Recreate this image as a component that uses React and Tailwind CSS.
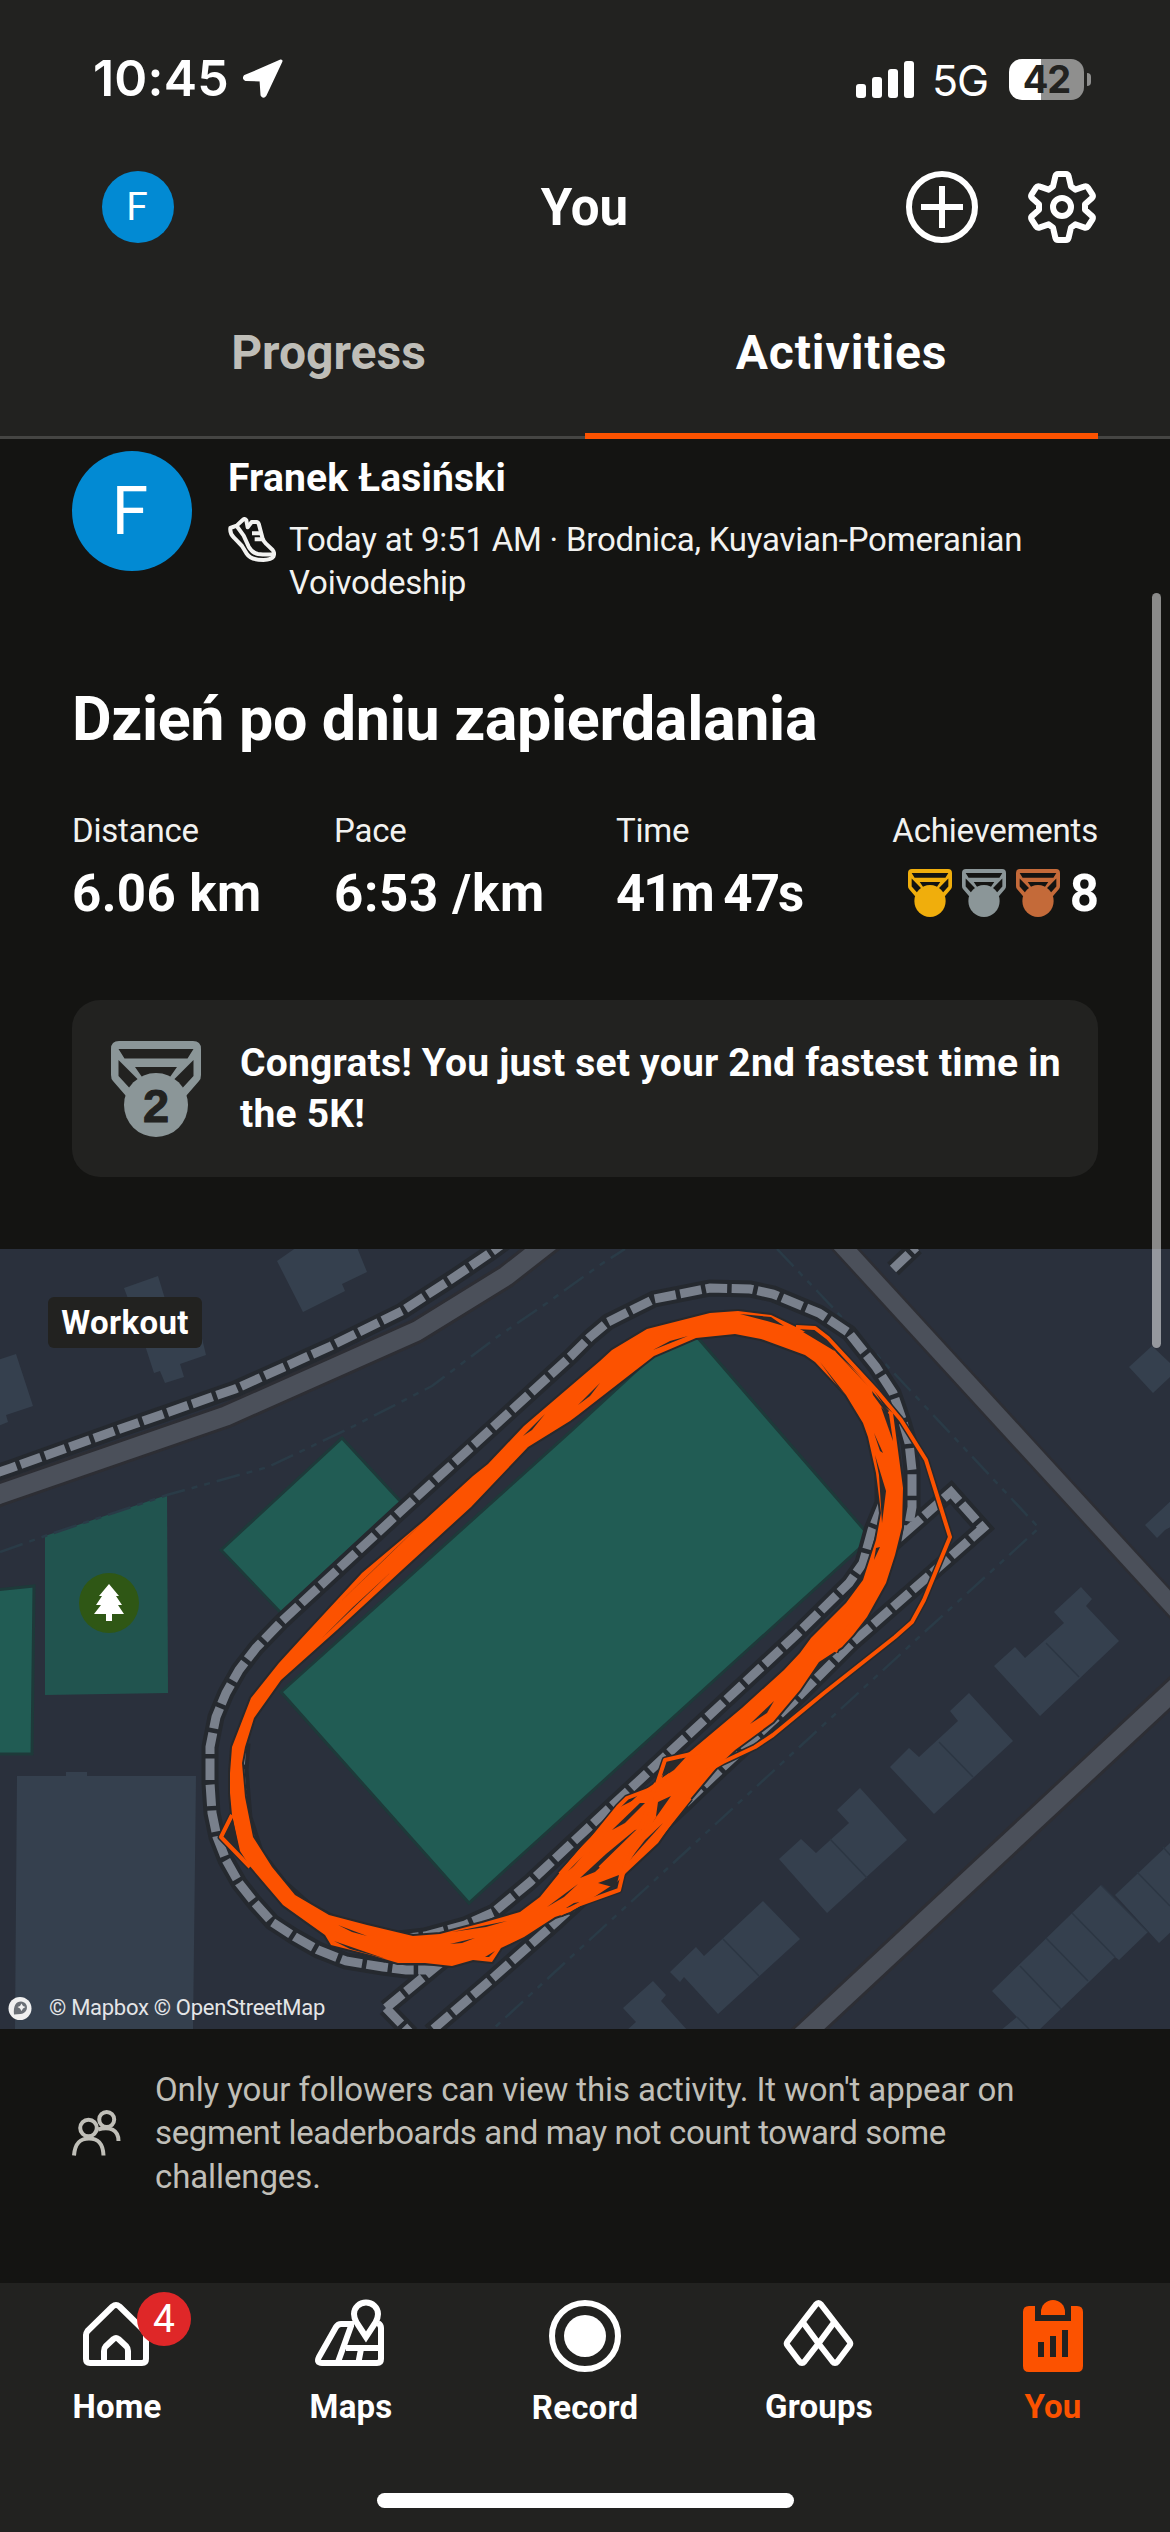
import React from 'react';

function StatusBar() {
  return (
    <div className="flex h-[138px] items-start justify-between pt-[57px] pr-[79px] pl-[93px]">
      <div className="flex items-center gap-[13px]">
        <span className="font-[Inter] text-[50px] leading-[42px] font-semibold tracking-[0.2px]">10:45</span>
        <svg className="h-[42px] w-[42px]" viewBox="242 57 42 42" fill="#fff" stroke="#fff" strokeWidth="3" strokeLinejoin="round">
          <path d="M281 61 L245 76.5 Q243.5 78.5 246 79.5 L261 80 L262 95 Q263.5 97.500 265 95 Z" />
        </svg>
      </div>
      <div className="flex items-center">
        <svg className="h-[41px] w-[60px]" viewBox="855 57 60 41" fill="#fff">
          <rect x="856" y="82" width="10" height="14" rx="3" />
          <rect x="872" y="75" width="10" height="21" rx="3" />
          <rect x="888" y="67" width="10" height="29" rx="3" />
          <rect x="904" y="59" width="10" height="37" rx="3" />
        </svg>
        <span className="ml-[17px] w-[57px] pt-[3px] font-[Inter] text-[43px] leading-[41px] tracking-[-1.1px]">5G</span>
        <div className="ml-[20px] flex h-[41px] w-[75px] items-center justify-center rounded-[13px] bg-[linear-gradient(90deg,#fff_32px,#8f8f8e_32px)]">
          <span className="font-[Inter] text-[38px] leading-[41px] font-bold tracking-[-1px] text-[#222220]">42</span>
        </div>
        <div className="ml-[3px] h-[13px] w-[4px] rounded-r-full bg-[#8f8f8e]" />
      </div>
    </div>
  );
}

function Gear() {
  return (
    <svg className="h-[72px] w-[72px]" viewBox="558 393 216 216" fill="none" stroke="#fff" strokeWidth="18" strokeLinejoin="round">
      <path d="M654 402 H678 Q684 402 686 409 L693 439 L706 449 L732 440 Q740 437 744 443 L757 463 Q761 470 755 475 L735 493 V509 L755 527 Q761 532 757 539 L744 559 Q740 565 732 562 L706 553 L693 563 L686 593 Q684 600 678 600 H654 Q648 600 646 593 L639 563 L626 553 L600 562 Q592 565 588 559 L575 539 Q571 532 577 527 L597 509 V493 L577 475 Q571 470 575 463 L588 443 Q592 437 600 440 L626 449 L639 439 L646 409 Q648 402 654 402 Z" />
      <circle cx="666" cy="501" r="27" />
    </svg>
  );
}

function NavBar() {
  return (
    <div className="grid h-[138px] grid-cols-3 items-center pr-[72px] pl-[102px]">
      <div className="flex h-[72px] w-[72px] items-center justify-center rounded-full bg-[#028ad3] pr-[2px] text-[39px]">F</div>
      <div className="-ml-[31px] pt-[2px] text-center text-[51px] leading-[60px] font-bold">You</div>
      <div className="flex justify-end gap-[48px]">
        <svg className="h-[72px] w-[72px]" viewBox="0 0 72 72" fill="none" stroke="#fff" strokeWidth="6">
          <circle cx="36" cy="36" r="33" />
          <path d="M36 15 V57 M15 36 H57" />
        </svg>
        <Gear />
      </div>
    </div>
  );
}

function Tabs() {
  return (
    <div className="flex h-[163px] items-stretch border-b-[3px] border-[#454543] px-[72px] text-center text-[48px] leading-[60px] font-bold">
      <div className="flex-1 pt-[47px] text-[#bfbeb8]">Progress</div>
      <div className="-mb-[3px] flex-1 border-b-[6px] border-[#fc5200] pt-[47px] tracking-[0.9px]">Activities</div>
    </div>
  );
}

function Shoe() {
  return (
    <svg className="-mt-px h-[45px] w-[48px] shrink-0" viewBox="504 231 144 135" fill="none" stroke="#f2f2f0" strokeWidth="12" strokeLinejoin="round">
      <path d="M511 264 L530 257 L548 240 Q555 234 559 241 L563 262 L575 246 H590 Q595 247 597 254 L608 296 Q611 305 618 311 L638 330 Q645 338 640 350 Q634 359 610 360 Q572 360 560 341 L546 318 L522 293 Q509 281 511 264 Z" />
      <path d="M530 258 L551 287 L566 320 Q576 338 594 342 Q618 345 641 343 M576 280 H602 M584 298 H608" />
    </svg>
  );
}

function Medal({ className, color, place }) {
  return (
    <svg className={className} viewBox="111 1041 90 96" preserveAspectRatio="none">
      <path
        fill={color}
        fillRule="evenodd"
        d="M111 1049 Q111 1041 119 1041 H193 Q201 1041 201 1049 V1075 Q201 1079 199 1081 L186 1096 H126 L113 1081 Q111 1079 111 1075 Z M118.500 1049 L124.500 1058.500 H187.500 L193.500 1049 Z M118.500 1060 V1076 L130 1088.500 L138 1079.500 Z M193.500 1060 V1076 L182 1088.500 L174 1079.500 Z M135 1067 L142 1077 H170 L177 1067 Z"
      />
      <circle cx="156" cy="1105" r="32" fill={color} />
      {place && (
        <text x="156" y="1121.500" textAnchor="middle" fontFamily="Liberation Sans, sans-serif" fontWeight="700" fontSize="47" fill="#222220" stroke="#222220" strokeWidth="1">
          {place}
        </text>
      )}
    </svg>
  );
}

function Activity() {
  return (
    <div className="px-[72px] pt-[12px]">
      <div className="flex gap-[36px]">
        <div className="flex h-[120px] w-[120px] shrink-0 items-center justify-center rounded-full bg-[#028ad3] pr-[4px] text-[66px]">F</div>
        <div>
          <div className="pt-px text-[39px] leading-[53px] font-bold tracking-[0.2px]">Franek Łasiński</div>
          <div className="mt-[13px] flex gap-[13px]">
            <Shoe />
            <div className="text-[33px] leading-[43px] tracking-[-0.22px] text-[#f2f2f0]">
              Today at 9:51 AM · Brodnica, Kuyavian-Pomeranian
              <br />
              Voivodeship
            </div>
          </div>
        </div>
      </div>
      <div className="mt-[79px] text-[61px] leading-[72px] font-bold tracking-[-0.35px]">Dzień po dniu zapierdalania</div>
      <div className="mt-[54px] grid grid-cols-[262px_282px_1fr_auto] text-[51px] leading-[60px] font-bold">
        <Stat label="Distance">
          <span className="tracking-[0.4px]">6.06 km</span>
        </Stat>
        <Stat label="Pace">
          <span className="tracking-[0.7px]">6:53 /km</span>
        </Stat>
        <Stat label="Time">
          <span className="tracking-[-2px]">41m 47s</span>
        </Stat>
        <Stat label="Achievements">
          <div className="flex items-center justify-end gap-[10px]">
            <Medal className="-mt-[2px] h-[48px] w-[44px]" color="#f0ae0c" />
            <Medal className="-mt-[2px] h-[48px] w-[44px]" color="#8b9698" />
            <Medal className="-mt-[2px] h-[48px] w-[44px]" color="#c46a39" />
            <span className="-mr-px">8</span>
          </div>
        </Stat>
      </div>
      <div className="mt-[76px] flex h-[177px] items-center rounded-[28px] bg-[#222220] pl-[39px]">
        <Medal className="h-[96px] w-[90px]" color="#8b9698" place="2" />
        <div className="ml-[39px] text-[39px] leading-[51px] font-bold tracking-[0.22px]">
          Congrats! You just set your 2nd fastest time in
          <br />
          the 5K!
        </div>
      </div>
    </div>
  );
}

function Stat({ label, children }) {
  return (
    <div>
      <div className="mb-[12px] text-[33px] leading-[43px] font-normal tracking-[-0.2px] text-[#f2f2f0]">{label}</div>
      {children}
    </div>
  );
}

const buildings = [
  '124,1288 158,1276 169,1312 200,1330 206,1355 180,1364 184,1377 165,1383 160,1371 154,1373 140,1330',
  '277,1261 300,1245 356,1245 367,1272 342,1284 345,1291 303,1312',
  '-2,1360 16,1354 33,1406 6,1415 8,1422 -2,1426',
  '17,1776 66,1776 66,1772 87,1772 87,1776 196,1776 193,2030 15,2030',
  '1081,1587 1092,1599 1086,1606 1119,1641 1040,1716 994,1666 1015,1647 1025,1658 1064,1623 1054,1612',
  '969,1693 1013,1741 934,1814 890,1767 909,1748 919,1757 958,1721 950,1711',
  '860,1788 907,1840 827,1913 779,1859 801,1839 816,1853 849,1823 837,1810',
  '763,1901 800,1939 718,2014 684,1977 680,1982 670,1972 696,1947 704,1956',
  '653,1981 666,1995 661,2001 688,2031 626,2031 636,2022 623,2008',
  '1101,1885 1148,1932 1119,1960 1115,1957 1038,2031 1000,2031 1017,2017 992,1991',
  '1115,1895 1172,1841 1172,1931 1159,1943',
  '1129,1367 1152,1346 1172,1365 1172,1375 1153,1393',
  '1145,1525 1172,1500 1172,1526 1165,1530 1157,1538',
];

const dashedPaths = [
  'M-4 1473 L11 1468 L120 1429 L235 1389 L331 1346 L402 1311 L450 1280 L490 1253 L512 1237',
  'M386 2008 L432 1970 L406 1970 L383 1967 L346 1961 L318 1950 L295 1937 L272 1922 L254 1902 L239 1883 L226 1860 L217 1837 L212 1813 L210 1783 L210 1747 L216 1717 L226 1693 L239 1670 L256 1648 L281 1622 L400 1512 L570 1357 L590 1337 L608 1322 L654 1299 L710 1288 L750 1289 L773 1294 L819 1313 L849 1333 L876 1367 L893 1393 L903 1422 L909 1443 L912 1470 L912 1507 L908 1530 L951 1492 L983 1528 L932 1573 L853 1642 L792 1703 L723 1767 L681 1807 L555 1923 L494 1977 L430 2032',
  'M386 2008 L411 2034',
  'M242 1743 L240 1770 L244 1818 L256 1855 L280 1886 L307 1910 L343 1929 L390 1940 L425 1936 L465 1925 L494 1912 L530 1882 L574 1841 L796 1635 L849 1583 L863 1563 L872 1530 L883 1503 L883 1470 L880 1440',
  'M893 1269 L916 1247',
];

const orangeBody =
  'M230 1773 L232 1747 L251 1698 L279 1663 L300 1640 L362 1573 L425 1520 L473 1476 L488 1464 L524 1426 L600 1361 L612 1350 L647 1329 L710 1313 L738 1311 L771 1315 L796 1327 L815 1337 L834 1350 L872 1387 L884 1406 L893 1413 L903 1488 L902 1527 L895 1555 L886 1583 L867 1617 L853 1635 L842 1647 L819 1662 L800 1690 L773 1722 L735 1750 L717 1767 L681 1810 L658 1843 L627 1872 L617 1882 L585 1903 L570 1912 L555 1917 L524 1937 L501 1948 L492 1962 L473 1960 L452 1966 L425 1963 L398 1963 L371 1955 L331 1945 L325 1935 L283 1905 L249 1865 L240 1851 L232 1815 L230 1793 Z M242 1763 L245 1797 L253 1837 L272 1867 L295 1895 L329 1915 L367 1925 L413 1936 L440 1934 L482 1923 L520 1912 L540 1897 L570 1860 L593 1833 L620 1807 L640 1797 L656 1783 L667 1770 L692 1750 L742 1708 L784 1670 L800 1653 L811 1638 L846 1603 L863 1580 L876 1540 L881 1513 L876 1473 L868 1437 L863 1423 L846 1395 L815 1362 L805 1355 L761 1339 L735 1334 L696 1338 L654 1356 L578 1415 L570 1421 L528 1447 L471 1507 L402 1570 L337 1630 L281 1680 L254 1718 L245 1747 Z';

const orangeStrays = [
  'M796 1327 L815 1328 L828 1338 L876 1390 L901 1420 L926 1460 L950 1537 L924 1600 L912 1622 L895 1637 L824 1693 L773 1735 L755 1747 L723 1762 L700 1775',
  'M232 1815 L221 1837 L250 1867',
  'M700 1752 L665 1760 L656 1787 L627 1798 L618 1807 L592 1839 L560 1874',
  'M670 1775 L640 1796 L612 1823 L575 1868',
  'M656 1783 L651 1800 L640 1829 L600 1868',
  'M655 1815 L625 1865 L619 1890 L580 1904 L560 1914',
  'M690 1798 L655 1842 L622 1872',
  'M835 1652 L840 1640 L850 1625',
];

const slivers = [
  '233,1820 224,1835 239,1850',
  '740,1314 771,1317 784,1326 767,1321',
  '803,1332 816,1331 868,1386 838,1353',
  '872,1391 889,1411 887,1414 873,1395',
  '881,1407 889,1414 893,1441',
  '874,1433 883,1453 880,1451',
  '875,1455 886,1491 882,1523 879,1475',
  '820,1362 846,1395 838,1387',
  '876,1548 880,1547 874,1560',
  '338,1604 428,1517 383,1561',
  '322,1638 391,1572 352,1608',
  '523,1436 545,1414 532,1430',
  '578,1405 600,1383 590,1396',
  '653,1350 688,1336 670,1341',
  '580,1878 595,1872 642,1829 635,1830 606,1854',
  '628,1862 655,1832 663,1823 645,1840',
  '652,1823 671,1796 658,1802 656,1816',
  '598,1883 619,1875 616,1888',
  '662,1778 667,1763 686,1757 674,1770',
  '750,1724 774,1701 767,1713',
  '612,1830 640,1803 645,1803 625,1823',
  '576,1852 598,1826 613,1811 603,1825',
  '566,1908 574,1903 580,1902 572,1907',
  '568,1871 598,1841 586,1856',
  '338,1925 367,1936 352,1932',
  '334,1941 386,1959 350,1949',
  '452,1932 507,1921 486,1927',
  '450,1944 475,1938 462,1943',
  '547,1907 578,1884 564,1897',
  '485,1957 495,1951 489,1957',
];

function TrackMap() {
  return (
    <svg className="block h-[780px] w-[1170px]" viewBox="0 1249 1170 780">
      <rect x="0" y="1249" width="1170" height="780" fill="#2a303c" />
      <g fill="#35404e">
        {buildings.map((points) => (
          <polygon key={points} points={points} />
        ))}
      </g>
      <path
        stroke="#2c3643"
        strokeWidth="1.500"
        d="M1046 1643 L1079 1677 M939 1742 L973 1777 M830 1839 L867 1878 M723 1939 L759 1976 M1072 1913 L1115 1957 M1046 1938 L1088 1981 M1020 1966 L1061 2009 M1017 2017 L1029 2029 M1101 1885 L1148 1932 M1137 1872 L1170 1906 M1163 1847 L1172 1857"
      />
      <polygon points="45,1536 167,1495 168,1693 45,1695" fill="#21544f" />
      <g fill="#215c54" stroke="#1e3a3a" strokeWidth="3">
        <polygon points="-6,1590 34,1586 32,1754 -6,1754" />
        <polygon points="342,1438 401,1502 281,1613 221,1550" />
        <polygon points="281,1692 570,1432 672,1338 698,1338 867,1533 861,1547 469,1903" />
      </g>
      <g fill="none" stroke="#2a3b47" strokeWidth="2.500" strokeDasharray="24 7 6 7 6 7">
        <path d="M0 1552 L45 1536 L167 1495 L268 1467 L348 1429 L432 1386 L497 1337 L547 1303 L600 1265 L625 1249" />
        <path d="M777 1249 L819 1293 L907 1387 L1039 1528 L918 1638 L570 1958 L492 2030" />
      </g>
      <g fill="none" strokeLinejoin="round">
        <path stroke="#2d2e34" strokeWidth="25" d="M-10 1498 L0 1494 L226 1416 L417 1331 L506 1276 L570 1226" />
        <path stroke="#4b505a" strokeWidth="19" d="M-10 1498 L0 1494 L226 1416 L417 1331 L506 1276 L570 1226" />
        <path stroke="#2d2e34" strokeWidth="22" d="M827 1229 L1190 1625" />
        <path stroke="#4b505a" strokeWidth="17" d="M827 1229 L1190 1625" />
        <path stroke="#2d2e34" strokeWidth="26" d="M1190 1675 L787 2050" />
        <path stroke="#4b505a" strokeWidth="20" d="M1190 1675 L787 2050" />
        <g stroke="#25292f" strokeWidth="17" strokeLinejoin="miter">
          {dashedPaths.map((d) => (
            <path key={d} d={d} />
          ))}
        </g>
        <g stroke="#79808c" strokeWidth="9" strokeDasharray="21.500 4.500" strokeLinejoin="miter">
          {dashedPaths.map((d) => (
            <path key={d} d={d} />
          ))}
        </g>
        <g stroke="#28292c" strokeWidth="7">
          {orangeStrays.map((d) => (
            <path key={d} d={d} />
          ))}
          <path strokeWidth="4" d={orangeBody} />
        </g>
      </g>
      <path fill="#fc5200" fillRule="evenodd" d={orangeBody} />
      <g fill="#2a2a2c">
        {slivers.map((points) => (
          <polygon key={points} points={points} />
        ))}
      </g>
      <g fill="none" stroke="#fc5200" strokeWidth="4" strokeLinejoin="round">
        {orangeStrays.map((d) => (
          <path key={d} d={d} />
        ))}
      </g>
      <circle cx="109" cy="1603" r="30" fill="#2f5715" />
      <path fill="#fff" d="M109 1584 L119 1596 H116 L122 1605 H118 L124 1614 H112 V1621 H106 V1614 H94 L101 1605 H96 L102 1596 H99 Z" />
      <circle cx="20" cy="2008.500" r="11.500" fill="#f0f0f0" />
      <path d="M14 2014.500 C13 2006 16 2001.500 21 2001.500 C29 2002 29 2013 20.500 2014 Z" fill="#6a6f76" />
      <path d="M21.500 2003.500 L23 2006 L25.500 2007 L23 2008.500 L21.500 2011 L20 2008.500 L17.500 2007 L20 2006 Z" fill="#f0f0f0" />
    </svg>
  );
}

function Followers() {
  return (
    <div className="flex h-[254px] items-start pt-[39px] pl-[72px] text-[#c0bfb8]">
      <svg className="mt-[42px] h-[46px] w-[50px] shrink-0" viewBox="72 2110 50 46" fill="none" stroke="currentColor" strokeWidth="4">
        <circle cx="106.700" cy="2119.500" r="7.500" />
        <path d="M98 2129.500 C110 2126 118.500 2130 118.500 2141" />
        <circle cx="88.500" cy="2128" r="8.300" fill="#141412" />
        <path d="M74 2155.500 C75 2143 80 2138.500 89 2138.500 C98 2138.500 103 2143 103.500 2155.500" />
      </svg>
      <div className="ml-[33px] text-[33px] leading-[43.300px] tracking-[-0.110px]">
        Only your followers can view this activity. It won't appear on
        <br />
        <span className="tracking-[-0.390px]">segment leaderboards and may not count toward some</span>
        <br />
        challenges.
      </div>
    </div>
  );
}

const iconStroke = { fill: 'none', stroke: '#fff', strokeWidth: 6, strokeLinejoin: 'round' };

function TabItem({ label, box, className = '', children }) {
  return (
    <div className={'relative flex w-[234px] flex-col items-center ' + className}>
      <svg className="h-[74px] w-[74px]" viewBox={box}>
        {children}
      </svg>
      <div className="mt-[15px] text-[33px] leading-[40px] font-bold tracking-[0.2px]">{label}</div>
    </div>
  );
}

function BottomBar() {
  return (
    <div className="flex h-[249px] flex-col items-center bg-[#222220]">
      <div className="flex h-[210px] w-full pt-[15px]">
        <div className="relative">
          <TabItem label="Home" box="80 2298 74 74">
            <path {...iconStroke} d="M86 2335 Q86 2333 87.500 2331 L112.500 2306.500 Q116 2303.500 119.500 2306.500 L144.500 2331 Q146 2333 146 2335 V2359 Q146 2363 142 2363 H90 Q86 2363 86 2359 Z" />
            <path {...iconStroke} d="M104 2363 V2351 Q104 2348 105.500 2346.500 L113.500 2339 Q116 2337 118.500 2339 L126.500 2346.500 Q128 2348 128 2351 V2363" />
          </TabItem>
          <div className="absolute -top-[6px] left-[137px] flex h-[54px] w-[54px] items-center justify-center rounded-full bg-[#df2728] text-[39px] leading-[54px]">4</div>
        </div>
        <TabItem label="Maps" box="314 2298 74 74">
          <path {...iconStroke} d="M354 2324 H341 Q338 2324 336 2327 L319 2357 Q316 2363 322 2363 H377 Q381 2363 381 2359 V2328 Q381 2325 378 2323 M351 2326 L338 2362 M346 2348 H381 M361 2349 L358.500 2362" />
          <path {...iconStroke} strokeLinejoin="miter" fill="#222220" d="M366 2337 L356.500 2322.500 Q354 2318 354 2314 A12 11.500 0 0 1 378 2314 Q378 2318 375.500 2322.500 Z" />
        </TabItem>
        <TabItem label="Record" box="548 2298 74 74" className="pt-px">
          <circle {...iconStroke} cx="585" cy="2335" r="33" />
          <circle cx="585" cy="2335" r="21" fill="#fff" />
        </TabItem>
        <TabItem label="Groups" box="782 2298 74 74">
          <path {...iconStroke} d="M816 2304.500 Q818.500 2301.500 821 2304.500 L849.500 2341.500 Q851 2343.500 849.500 2345.500 L837.500 2361.500 Q835 2364.500 832.500 2361.500 L818.500 2343.500 L804.500 2361.500 Q802 2364.500 799.500 2361.500 L787.500 2345.500 Q786 2343.500 787.500 2341.500 Z" />
          <path {...iconStroke} d="M803 2322.500 L818.500 2343.500 L834 2322.500" />
        </TabItem>
        <TabItem label="You" box="1015 2298 74 74" className="text-[#fc5200]">
          <path
            fill="currentColor"
            fillRule="evenodd"
            d="M1028 2306 H1034 V2321 H1070 V2306 H1076 Q1082 2306 1082 2312 V2366 Q1082 2372 1076 2372 H1028 Q1022 2372 1022 2366 V2312 Q1022 2306 1028 2306 Z M1037 2342 V2357 H1043 V2342 Z M1049 2336 V2357 H1055 V2336 Z M1061 2330 V2357 H1067 V2330 Z"
          />
          <path fill="currentColor" d="M1040 2315 V2312 A12 12 0 0 1 1064 2312 V2315 Z" />
        </TabItem>
      </div>
      <div className="h-[15px] w-[417px] rounded-full bg-white" />
    </div>
  );
}

export default function App() {
  return (
    <div className="relative h-[2532px] w-[1170px] overflow-hidden bg-[#141412] font-[Roboto,sans-serif] whitespace-nowrap text-white">
      <div className="bg-[#222220]">
        <StatusBar />
        <NavBar />
        <Tabs />
      </div>
      <Activity />
      <div className="relative mt-[72px] h-[780px]">
        <TrackMap />
        <div className="absolute top-[48px] left-[48px] flex h-[51px] w-[154px] items-center justify-center rounded-[6px] bg-[#222220] text-[33px] leading-[51px] font-bold tracking-[0.36px]">
          Workout
        </div>
        <div className="absolute bottom-[7px] left-[49px] text-[22px] leading-[28px] tracking-[-0.290px] text-[#e4e5e7]">© Mapbox © OpenStreetMap</div>
      </div>
      <Followers />
      <BottomBar />
      <div className="absolute top-[593px] left-[1152px] h-[755px] w-[9px] rounded-full bg-white/50" />
    </div>
  );
}
